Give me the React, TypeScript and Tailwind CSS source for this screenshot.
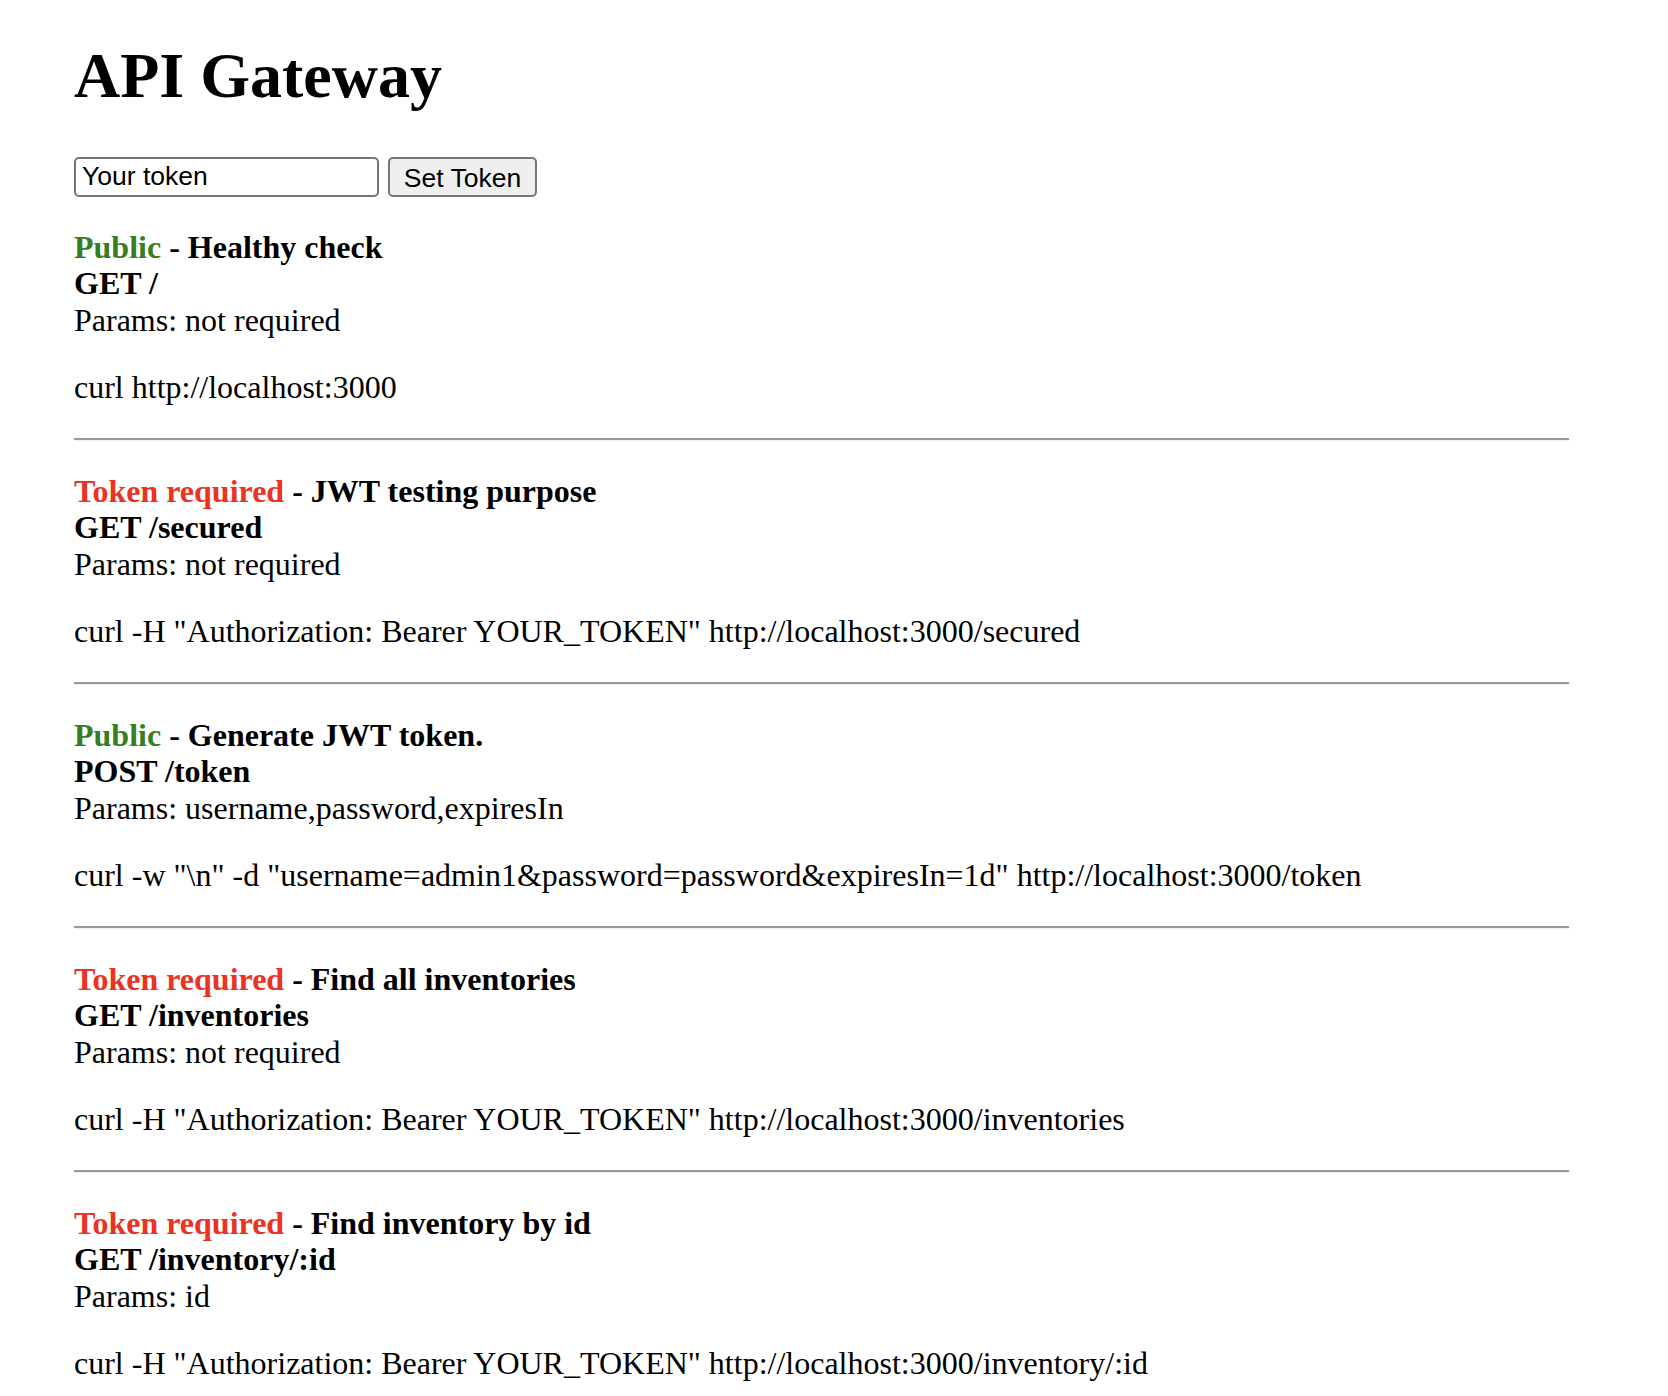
const endpoints = [
  {
    access: 'Public',
    title: 'Healthy check',
    route: 'GET /',
    params: 'not required',
    curl: 'curl http://localhost:3000',
  },
  {
    access: 'Token required',
    title: 'JWT testing purpose',
    route: 'GET /secured',
    params: 'not required',
    curl: 'curl -H "Authorization: Bearer YOUR_TOKEN" http://localhost:3000/secured',
  },
  {
    access: 'Public',
    title: 'Generate JWT token.',
    route: 'POST /token',
    params: 'username,password,expiresIn',
    curl: 'curl -w "\\n" -d "username=admin1&password=password&expiresIn=1d" http://localhost:3000/token',
  },
  {
    access: 'Token required',
    title: 'Find all inventories',
    route: 'GET /inventories',
    params: 'not required',
    curl: 'curl -H "Authorization: Bearer YOUR_TOKEN" http://localhost:3000/inventories',
  },
  {
    access: 'Token required',
    title: 'Find inventory by id',
    route: 'GET /inventory/:id',
    params: 'id',
    curl: 'curl -H "Authorization: Bearer YOUR_TOKEN" http://localhost:3000/inventory/:id',
  },
];

export default function App() {
  return (
    <div className="min-h-screen bg-white text-black pl-[74px] pt-[39px] font-['Liberation_Serif','Times_New_Roman',serif]">
      <div className="w-[1495px]">
        {/* Header */}
        <h1 className="text-[64px] leading-[73.5px] font-bold">API Gateway</h1>

        {/* Token form */}
        <div className="mt-[44px] flex items-start font-['Liberation_Sans',Arial,sans-serif] text-[26.5px]">
          <input
            defaultValue="Your token"
            className="w-[305px] h-[40px] border-2 border-[#767676] rounded-[5px] px-[6px] text-black outline-none"
          />
          <button className="ml-[9px] w-[149px] h-[40px] border-2 border-[#767676] rounded-[5px] bg-[#efefef] text-black">
            Set Token
          </button>
        </div>

        {/* Endpoint list */}
        {endpoints.map((ep) => (
          <div key={ep.curl} className="pt-[32px] text-[32px] leading-[36.5px]">
            <div className="font-bold">
              <span className={ep.access === 'Public' ? 'text-[#377d22]' : 'text-[#ea3323]'}>{ep.access}</span> - {ep.title}
            </div>
            <div className="font-bold">{ep.route}</div>
            <div>Params: {ep.params}</div>
            <p className="mt-[31px] whitespace-nowrap">{ep.curl}</p>
            <hr className="mt-[32px] h-0 border-0 border-t-2 border-t-[#9a9a9a] border-b border-b-[#eeeeee]" />
          </div>
        ))}
      </div>
    </div>
  );
}
